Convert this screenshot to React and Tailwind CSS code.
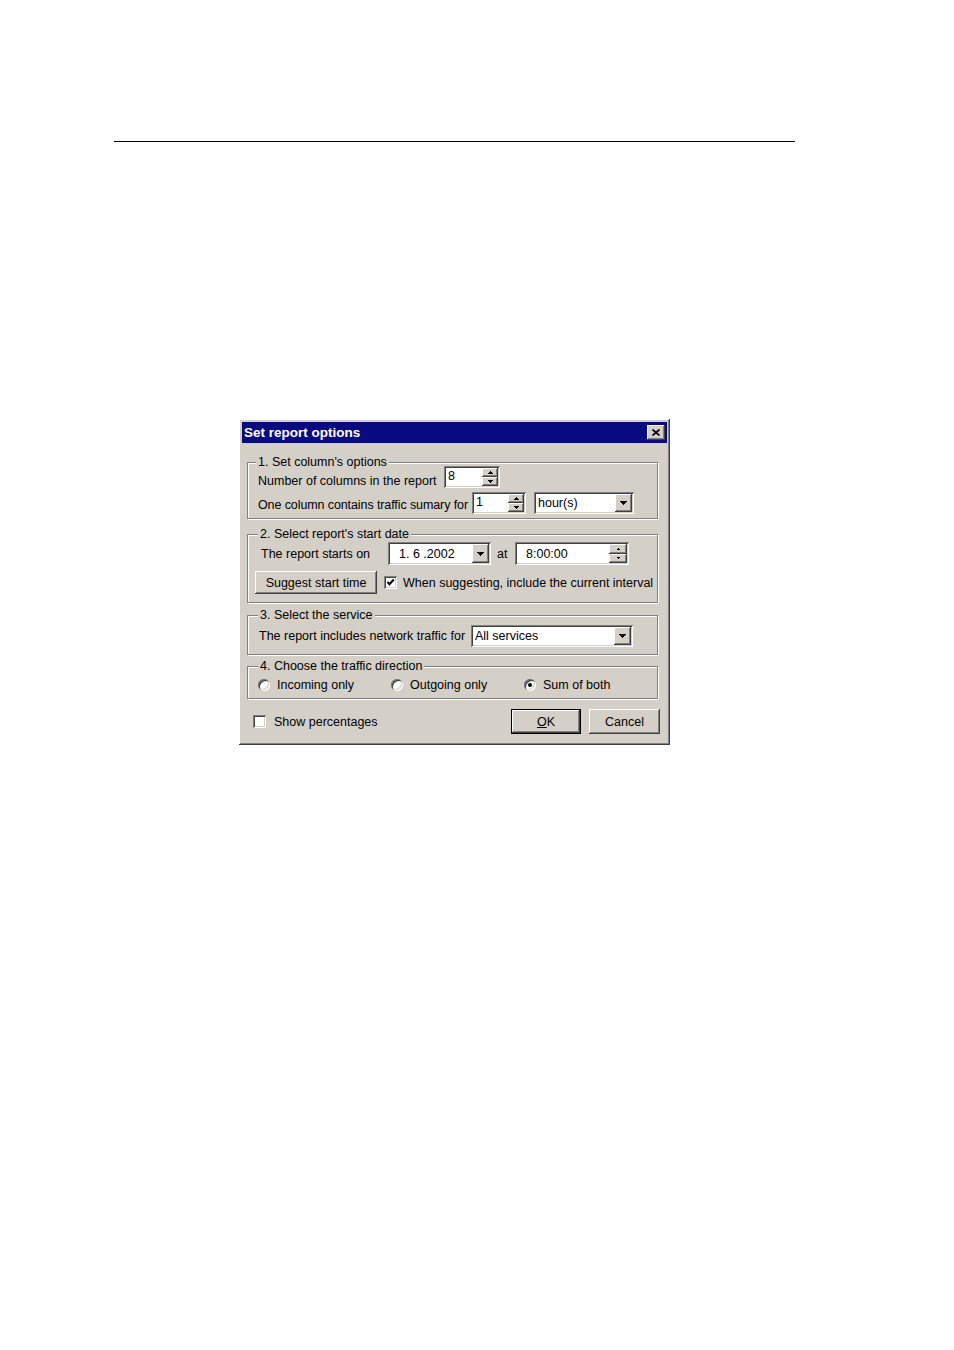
import React from "react"

const raised = "shadow-[inset_-1px_-1px_0_#404040,inset_1px_1px_0_#fff,inset_-2px_-2px_0_#808080,inset_2px_2px_0_#d4d0c8]"
const sunken = "shadow-[inset_1px_1px_0_#808080,inset_-1px_-1px_0_#fff,inset_2px_2px_0_#404040,inset_-2px_-2px_0_#d4d0c8]"

function DownArrow() {
    return (
        <svg width="7" height="4" shapeRendering="crispEdges">
            <rect x="0" y="0" width="7" height="1" fill="#000" />
            <rect x="1" y="1" width="5" height="1" fill="#000" />
            <rect x="2" y="2" width="3" height="1" fill="#000" />
            <rect x="3" y="3" width="1" height="1" fill="#000" />
        </svg>
    )
}

function SpinArrow({up, small}) {
    const w = small ? 3 : 5
    const rows = small ? [3, 1] : [5, 3, 1]
    return (
        <svg width={w} height={rows.length} shapeRendering="crispEdges" className={up ? "" : "rotate-180"}>
            {rows.slice().reverse().map((r, i) => (
                <rect key={i} x={(w - r) / 2} y={i} width={r} height="1" fill="#000" />
            ))}
        </svg>
    )
}

function Spin({small}) {
    return (
        <div className="flex flex-col w-[16px] shrink-0">
            <div className={`flex-1 flex items-center justify-center bg-[#d4d0c8] ${raised}`}><SpinArrow up small={small} /></div>
            <div className={`flex-1 flex items-center justify-center bg-[#d4d0c8] ${raised}`}><SpinArrow small={small} /></div>
        </div>
    )
}

function SpinEdit({value, className, small, textClass = ""}) {
    return (
        <div className={`flex bg-white p-[2px] ${sunken} ${className}`}>
            <span className={`flex-1 ${textClass}`}>{value}</span>
            <Spin small={small} />
        </div>
    )
}

function Combo({value, className, textClass = ""}) {
    return (
        <div className={`flex items-center bg-white p-[2px] ${sunken} ${className}`}>
            <span className={`flex-1 ${textClass}`}>{value}</span>
            <div className={`w-[17px] self-stretch flex items-center justify-center bg-[#d4d0c8] ${raised}`}>
                <DownArrow />
            </div>
        </div>
    )
}

function Group({title, left, className, children}) {
    return (
        <div className={`relative w-[411px] border border-[#808080] shadow-[1px_1px_0_#fff,inset_1px_1px_0_#fff] ${className}`}>
            <span className={`absolute -top-[8px] ${left} px-[2px] bg-[#d4d0c8] leading-[14px] whitespace-nowrap`}>{title}</span>
            {children}
        </div>
    )
}

function Checkbox({checked}) {
    return (
        <div className={`w-[13px] h-[13px] shrink-0 bg-white flex items-center justify-center ${sunken}`}>
            {checked && (
                <svg width="9" height="9" viewBox="0 0 9 9">
                    <path d="M1.5 4l2 2.2L7.8 1.5" stroke="#000" strokeWidth="2" fill="none" />
                </svg>
            )}
        </div>
    )
}

function Radio({checked, label}) {
    return (
        <div className="flex items-center w-[133px] shrink-0">
            <div className="w-[12px] h-[12px] rounded-full bg-white flex items-center justify-center shadow-[inset_1px_1px_0_#808080,inset_-1px_-1px_0_#fff,inset_2px_2px_0_#404040,inset_-2px_-2px_0_#d4d0c8]">
                {checked && <div className="w-[4px] h-[4px] rounded-full bg-black" />}
            </div>
            <span className="ml-[7px] whitespace-nowrap">{label}</span>
        </div>
    )
}

export default function App() {
    return (
        <div className="w-[954px] min-h-[1350px] bg-white pt-[141px] font-['Liberation_Sans',Arial,sans-serif] text-[12.5px] leading-[14px] text-black">
            <div className="ml-[114px] w-[681px] h-px bg-black" />

            <div className={`mt-[277px] ml-[239px] w-[431px] p-[3px] bg-[#d4d0c8] ${raised}`}>
                {/* title bar */}
                <div className="h-[21px] bg-[#0a0a80] flex items-center pl-[2px] pr-[2px]">
                    <span className="flex-1 text-white font-bold text-[13.5px]">Set report options</span>
                    <div className={`w-[18px] h-[15px] bg-[#d4d0c8] flex items-center justify-center ${raised}`}>
                        <svg width="8" height="7" viewBox="0 0 8 7">
                            <path d="M0.5 0.5L7.5 6.5M7.5 0.5L0.5 6.5" stroke="#000" strokeWidth="1.7" />
                        </svg>
                    </div>
                </div>

                <div className="pl-[5px] pt-[19px] pb-[8px]">
                    <Group title="1. Set column's options" left="left-[8px]" className="pt-[3px] pb-[4px] pl-[10px]">
                        <div className="flex items-start h-[22px]">
                            <span className="w-[186px] shrink-0 mt-[8px] whitespace-nowrap">Number of columns in the report</span>
                            <SpinEdit value="8" className="w-[56px] h-[22px]" textClass="pl-[2px] pt-[1px]" />
                        </div>
                        <div className="flex items-start h-[22px] mt-[4px]">
                            <span className="w-[214px] shrink-0 mt-[6px] whitespace-nowrap tracking-[-0.1px]">One column contains traffic sumary for</span>
                            <SpinEdit value="1" className="w-[54px] h-[22px]" textClass="pl-[2px] pt-[1px]" />
                            <Combo value="hour(s)" className="w-[100px] h-[22px] ml-[8px]" textClass="pl-[2px]" />
                        </div>
                    </Group>

                    <Group title="2. Select report's start date" left="left-[10px]" className="mt-[15px] pt-[7px] pb-[8px] pl-[7px]">
                        <div className="flex items-center h-[23px]">
                            <span className="w-[127px] ml-[6px] shrink-0 whitespace-nowrap">The report starts on</span>
                            <Combo value="1. 6 .2002" className="w-[103px] h-[23px]" textClass="pl-[9px]" />
                            <span className="w-[18px] ml-[6px] shrink-0">at</span>
                            <div className={`flex items-center bg-white p-[2px] w-[114px] h-[23px] ${sunken}`}>
                                <span className="flex-1 pl-[9px]">8:00:00</span>
                                <div className="flex flex-col w-[18px] self-stretch">
                                    <div className={`flex-1 flex items-center justify-center bg-[#d4d0c8] ${raised}`}><SpinArrow up small /></div>
                                    <div className={`flex-1 flex items-center justify-center bg-[#d4d0c8] ${raised}`}><SpinArrow small /></div>
                                </div>
                            </div>
                        </div>
                        <div className="flex items-center h-[23px] mt-[6px]">
                            <div className={`w-[122px] h-[23px] bg-[#d4d0c8] flex items-center justify-center whitespace-nowrap ${raised}`}>Suggest start time</div>
                            <div className="ml-[7px]"><Checkbox checked /></div>
                            <span className="ml-[6px] whitespace-nowrap">When suggesting, include the current interval</span>
                        </div>
                    </Group>

                    <Group title="3. Select the service" left="left-[10px]" className="mt-[12px] pt-[9px] pb-[7px] pl-[11px]">
                        <div className="flex items-center h-[22px]">
                            <span className="w-[212px] shrink-0 whitespace-nowrap">The report includes network traffic for</span>
                            <Combo value="All services" className="w-[162px] h-[22px]" textClass="pl-[2px]" />
                        </div>
                    </Group>

                    <Group title="4. Choose the traffic direction" left="left-[10px]" className="mt-[11px] pt-[11px] pb-[6px] pl-[10px]">
                        <div className="flex items-center h-[14px]">
                            <Radio label="Incoming only" />
                            <Radio label="Outgoing only" />
                            <Radio checked label="Sum of both" />
                        </div>
                    </Group>

                    <div className="flex items-center w-[413px] mt-[10px] h-[25px]">
                        <div className="ml-[6px]"><Checkbox /></div>
                        <span className="ml-[8px]">Show percentages</span>
                        <div className="ml-auto flex gap-[8px]">
                            <div className="w-[70px] h-[25px] border border-black">
                                <div className={`w-full h-full bg-[#d4d0c8] flex items-center justify-center ${raised}`}>
                                    <span><span className="underline">O</span>K</span>
                                </div>
                            </div>
                            <div className={`w-[71px] h-[25px] bg-[#d4d0c8] flex items-center justify-center ${raised}`}>Cancel</div>
                        </div>
                    </div>
                </div>
            </div>
        </div>
    )
}
